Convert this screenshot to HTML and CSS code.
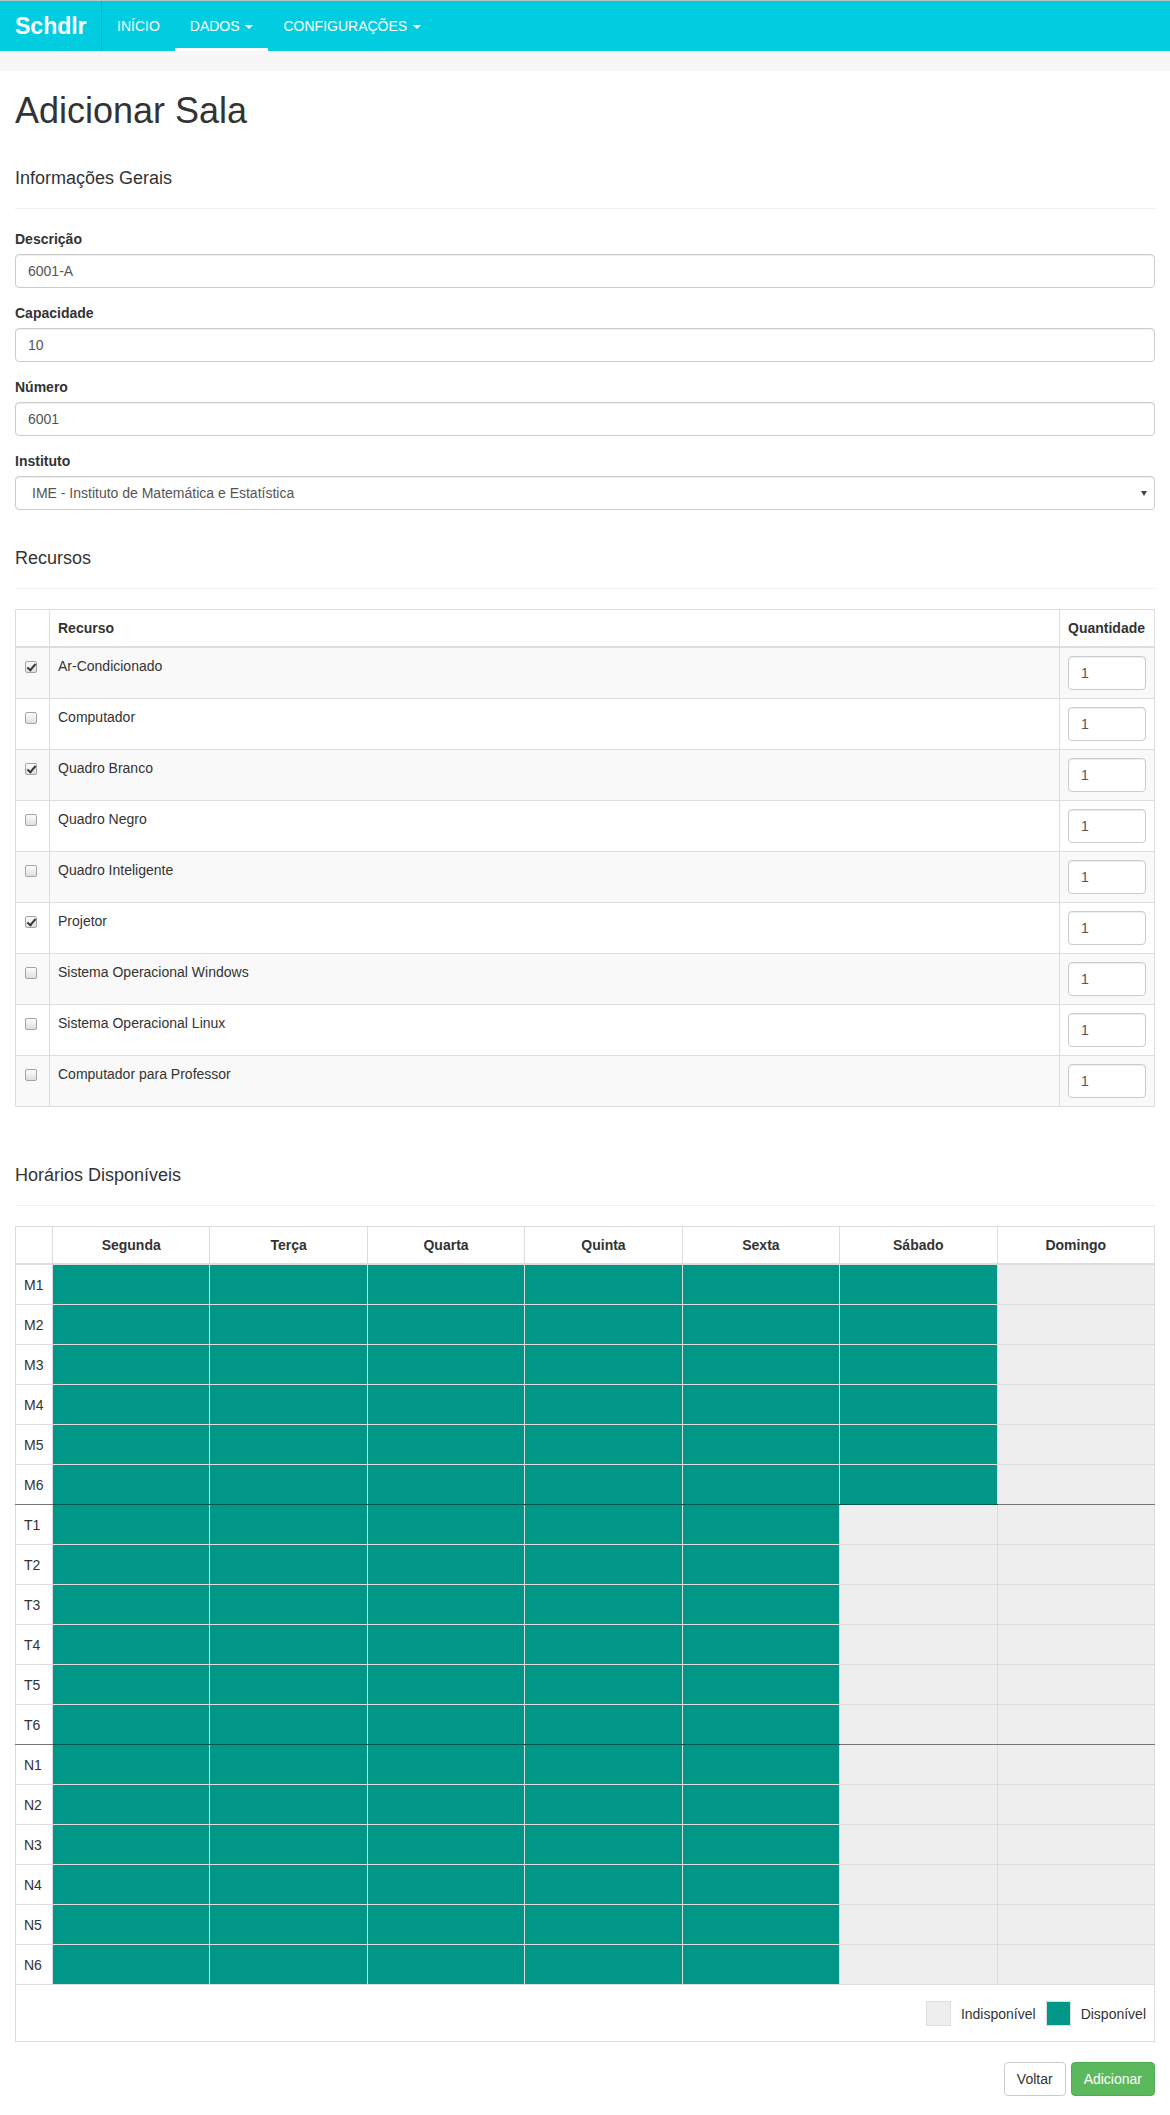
FILE: index.html
```html
<!DOCTYPE html>
<html lang="pt-BR">
<head>
<meta charset="utf-8">
<title>Adicionar Sala</title>
<link rel="stylesheet" href="styles.css">
</head>
<body>
<nav class="navbar">
  <a class="brand" href="#">Schdlr</a>
  <div class="nav">
    <a href="#">INÍCIO</a>
    <a href="#" class="active">DADOS <span class="caret"></span></a>
    <a href="#">CONFIGURAÇÕES <span class="caret"></span></a>
  </div>
</nav>
<div class="subbar"></div>
<div class="container">
  <h1>Adicionar Sala</h1>

  <h4 class="section-title first">Informações Gerais</h4>
  <hr>
  <div class="form-group">
    <label>Descrição</label>
    <input class="form-control" type="text" value="6001-A">
  </div>
  <div class="form-group">
    <label>Capacidade</label>
    <input class="form-control" type="text" value="10">
  </div>
  <div class="form-group">
    <label>Número</label>
    <input class="form-control" type="text" value="6001">
  </div>
  <div class="form-group">
    <label>Instituto</label>
    <div class="select-wrap">
      <select class="form-control select">
        <option>IME - Instituto de Matemática e Estatística</option>
      </select>
    </div>
  </div>

  <h4 class="section-title recursos">Recursos</h4>
  <hr>
  <table class="table resources">
    <thead>
      <tr><th class="col-check"></th><th>Recurso</th><th class="col-qty">Quantidade</th></tr>
    </thead>
    <tbody>
      <tr><td><input type="checkbox" class="cb" checked></td><td>Ar-Condicionado</td><td><input class="form-control" type="text" value="1"></td></tr>
      <tr><td><input type="checkbox" class="cb"></td><td>Computador</td><td><input class="form-control" type="text" value="1"></td></tr>
      <tr><td><input type="checkbox" class="cb" checked></td><td>Quadro Branco</td><td><input class="form-control" type="text" value="1"></td></tr>
      <tr><td><input type="checkbox" class="cb"></td><td>Quadro Negro</td><td><input class="form-control" type="text" value="1"></td></tr>
      <tr><td><input type="checkbox" class="cb"></td><td>Quadro Inteligente</td><td><input class="form-control" type="text" value="1"></td></tr>
      <tr><td><input type="checkbox" class="cb" checked></td><td>Projetor</td><td><input class="form-control" type="text" value="1"></td></tr>
      <tr><td><input type="checkbox" class="cb"></td><td>Sistema Operacional Windows</td><td><input class="form-control" type="text" value="1"></td></tr>
      <tr><td><input type="checkbox" class="cb"></td><td>Sistema Operacional Linux</td><td><input class="form-control" type="text" value="1"></td></tr>
      <tr><td><input type="checkbox" class="cb"></td><td>Computador para Professor</td><td><input class="form-control" type="text" value="1"></td></tr>
    </tbody>
  </table>

  <h4 class="section-title horarios">Horários Disponíveis</h4>
  <hr>
  <table class="table schedule">
    <thead>
      <tr><th class="col-label"></th><th>Segunda</th><th>Terça</th><th>Quarta</th><th>Quinta</th><th>Sexta</th><th>Sábado</th><th>Domingo</th></tr>
    </thead>
    <tbody>
      <tr><td class="lbl">M1</td><td class="on"></td><td class="on"></td><td class="on"></td><td class="on"></td><td class="on"></td><td class="on"></td><td class="off"></td></tr>
      <tr><td class="lbl">M2</td><td class="on"></td><td class="on"></td><td class="on"></td><td class="on"></td><td class="on"></td><td class="on"></td><td class="off"></td></tr>
      <tr><td class="lbl">M3</td><td class="on"></td><td class="on"></td><td class="on"></td><td class="on"></td><td class="on"></td><td class="on"></td><td class="off"></td></tr>
      <tr><td class="lbl">M4</td><td class="on"></td><td class="on"></td><td class="on"></td><td class="on"></td><td class="on"></td><td class="on"></td><td class="off"></td></tr>
      <tr><td class="lbl">M5</td><td class="on"></td><td class="on"></td><td class="on"></td><td class="on"></td><td class="on"></td><td class="on"></td><td class="off"></td></tr>
      <tr class="sep"><td class="lbl">M6</td><td class="on"></td><td class="on"></td><td class="on"></td><td class="on"></td><td class="on"></td><td class="on"></td><td class="off"></td></tr>
      <tr><td class="lbl">T1</td><td class="on"></td><td class="on"></td><td class="on"></td><td class="on"></td><td class="on"></td><td class="off"></td><td class="off"></td></tr>
      <tr><td class="lbl">T2</td><td class="on"></td><td class="on"></td><td class="on"></td><td class="on"></td><td class="on"></td><td class="off"></td><td class="off"></td></tr>
      <tr><td class="lbl">T3</td><td class="on"></td><td class="on"></td><td class="on"></td><td class="on"></td><td class="on"></td><td class="off"></td><td class="off"></td></tr>
      <tr><td class="lbl">T4</td><td class="on"></td><td class="on"></td><td class="on"></td><td class="on"></td><td class="on"></td><td class="off"></td><td class="off"></td></tr>
      <tr><td class="lbl">T5</td><td class="on"></td><td class="on"></td><td class="on"></td><td class="on"></td><td class="on"></td><td class="off"></td><td class="off"></td></tr>
      <tr class="sep"><td class="lbl">T6</td><td class="on"></td><td class="on"></td><td class="on"></td><td class="on"></td><td class="on"></td><td class="off"></td><td class="off"></td></tr>
      <tr><td class="lbl">N1</td><td class="on"></td><td class="on"></td><td class="on"></td><td class="on"></td><td class="on"></td><td class="off"></td><td class="off"></td></tr>
      <tr><td class="lbl">N2</td><td class="on"></td><td class="on"></td><td class="on"></td><td class="on"></td><td class="on"></td><td class="off"></td><td class="off"></td></tr>
      <tr><td class="lbl">N3</td><td class="on"></td><td class="on"></td><td class="on"></td><td class="on"></td><td class="on"></td><td class="off"></td><td class="off"></td></tr>
      <tr><td class="lbl">N4</td><td class="on"></td><td class="on"></td><td class="on"></td><td class="on"></td><td class="on"></td><td class="off"></td><td class="off"></td></tr>
      <tr><td class="lbl">N5</td><td class="on"></td><td class="on"></td><td class="on"></td><td class="on"></td><td class="on"></td><td class="off"></td><td class="off"></td></tr>
      <tr><td class="lbl">N6</td><td class="on"></td><td class="on"></td><td class="on"></td><td class="on"></td><td class="on"></td><td class="off"></td><td class="off"></td></tr>
    </tbody>
    <tfoot>
      <tr>
        <td colspan="8" class="legend-cell">
          <div class="legend">
            <span class="swatch off"></span><span class="legend-text">Indisponível</span>
            <span class="swatch on second"></span><span class="legend-text">Disponível</span>
          </div>
        </td>
      </tr>
    </tfoot>
  </table>

  <div class="actions">
    <button class="btn btn-default" type="button">Voltar</button>
    <button class="btn btn-success" type="button">Adicionar</button>
  </div>
</div>
</body>
</html>
```
FILE: styles.css
```css
* {
  box-sizing: border-box;
}

html, body {
  margin: 0;
  padding: 0;
}

body {
  font-family: "Liberation Sans", Arial, sans-serif;
  font-size: 14px;
  line-height: 20px;
  color: #333;
  background: #fff;
}

/* Navbar */
.navbar {
  display: flex;
  height: 51px;
  background: #02cde0;
  border-top: 1px solid #b9c4c6;
}

.brand {
  display: block;
  width: 102px;
  padding: 15px;
  font-size: 23px;
  font-weight: bold;
  line-height: 20px;
  color: #fff;
  text-decoration: none;
  border-right: 1px solid #0aaebe;
  white-space: nowrap;
}

.nav {
  display: flex;
}

.nav a {
  display: block;
  padding: 15px;
  font-size: 14px;
  line-height: 20px;
  color: #fff;
  text-decoration: none;
  white-space: nowrap;
}

.nav a.active {
  box-shadow: inset 0 -3px 0 #fff;
}

.caret {
  display: inline-block;
  width: 0;
  height: 0;
  margin-left: 2px;
  vertical-align: middle;
  border-top: 4px solid #fff;
  border-left: 4px solid transparent;
  border-right: 4px solid transparent;
}

.subbar {
  height: 20px;
  background: #f7f7f7;
}

/* Content */
.container {
  padding: 0 15px 19px;
}

h1 {
  margin: 20px 0 0;
  font-size: 36px;
  font-weight: 500;
  line-height: 40px;
}

.section-title {
  margin: 0;
  font-size: 18px;
  font-weight: 500;
  line-height: 20px;
}

.section-title.first {
  margin-top: 37px;
}

.section-title.recursos {
  margin-top: 38px;
}

.section-title.horarios {
  margin-top: 58px;
}

hr {
  height: 0;
  margin: 20px 0;
  border: 0;
  border-top: 1px solid #eee;
}

.form-group {
  margin-bottom: 15px;
}

label {
  display: block;
  margin-bottom: 5px;
  font-weight: bold;
}

.form-control {
  display: block;
  width: 100%;
  height: 34px;
  padding: 6px 12px;
  font-family: inherit;
  font-size: 14px;
  line-height: 20px;
  color: #555;
  background: #fff;
  border: 1px solid #ccc;
  border-radius: 4px;
  box-shadow: inset 0 1px 1px rgba(0, 0, 0, .075);
}

.select-wrap {
  position: relative;
}

.select {
  -webkit-appearance: none;
  appearance: none;
  padding-left: 16px;
}

.select-wrap::after {
  content: "";
  position: absolute;
  right: 8px;
  top: 15px;
  border-top: 5px solid #444;
  border-left: 3px solid transparent;
  border-right: 3px solid transparent;
  pointer-events: none;
}

/* Tables */
.table {
  width: 100%;
  border-collapse: collapse;
  border-spacing: 0;
  table-layout: fixed;
  border: 1px solid #ddd;
}

.table th,
.table td {
  padding: 8px;
  line-height: 20px;
  text-align: left;
  vertical-align: top;
  border: 1px solid #ddd;
}

.table thead th {
  vertical-align: bottom;
  border-bottom: 2px solid #ddd;
}

.resources .col-check {
  width: 34px;
}

.resources .col-qty {
  width: 95px;
}

.resources tbody tr:nth-child(odd) td {
  background: #f9f9f9;
}

.cb {
  -webkit-appearance: none;
  appearance: none;
  position: relative;
  display: block;
  width: 12px;
  height: 12px;
  margin: 5px 0 0 1px;
  border: 1px solid #a4a4a4;
  border-radius: 2px;
  background: linear-gradient(#fdfdfd, #dedede);
}

.cb:checked::after {
  content: "";
  position: absolute;
  left: 3px;
  top: 0px;
  width: 3px;
  height: 7px;
  border: solid #3a3a3a;
  border-width: 0 2px 2px 0;
  transform: rotate(40deg);
}

/* Schedule */
.schedule th {
  text-align: center;
}

.schedule .col-label {
  width: 37px;
}

.schedule tbody td {
  padding: 10px 8px 9px;
  vertical-align: middle;
}

.schedule td.lbl {
  background: #fff;
}

.on {
  background: #009688;
}

.off {
  background: #eee;
}

.schedule tr.sep td {
  border-bottom-color: #777;
}

.schedule tr.sep td.on {
  border-bottom-color: #00574f;
}

.schedule .legend-cell {
  padding: 16px 8px 15px;
  background: #fff;
}

.legend {
  display: flex;
  justify-content: flex-end;
  align-items: center;
}

.swatch {
  display: block;
  width: 25px;
  height: 25px;
  border: 1px solid #ddd;
}

.swatch.second {
  margin-left: 10px;
}

.legend-text {
  margin-left: 10px;
}

/* Buttons */
.actions {
  display: flex;
  justify-content: flex-end;
  gap: 5px;
  margin-top: 20px;
}

.btn {
  display: inline-block;
  padding: 6px 12px;
  font-family: inherit;
  font-size: 14px;
  line-height: 20px;
  border: 1px solid transparent;
  border-radius: 4px;
  cursor: pointer;
}

.btn-default {
  color: #333;
  background: #fff;
  border-color: #ccc;
}

.btn-success {
  color: #fff;
  background: #5cb85c;
  border-color: #4cae4c;
}
```
